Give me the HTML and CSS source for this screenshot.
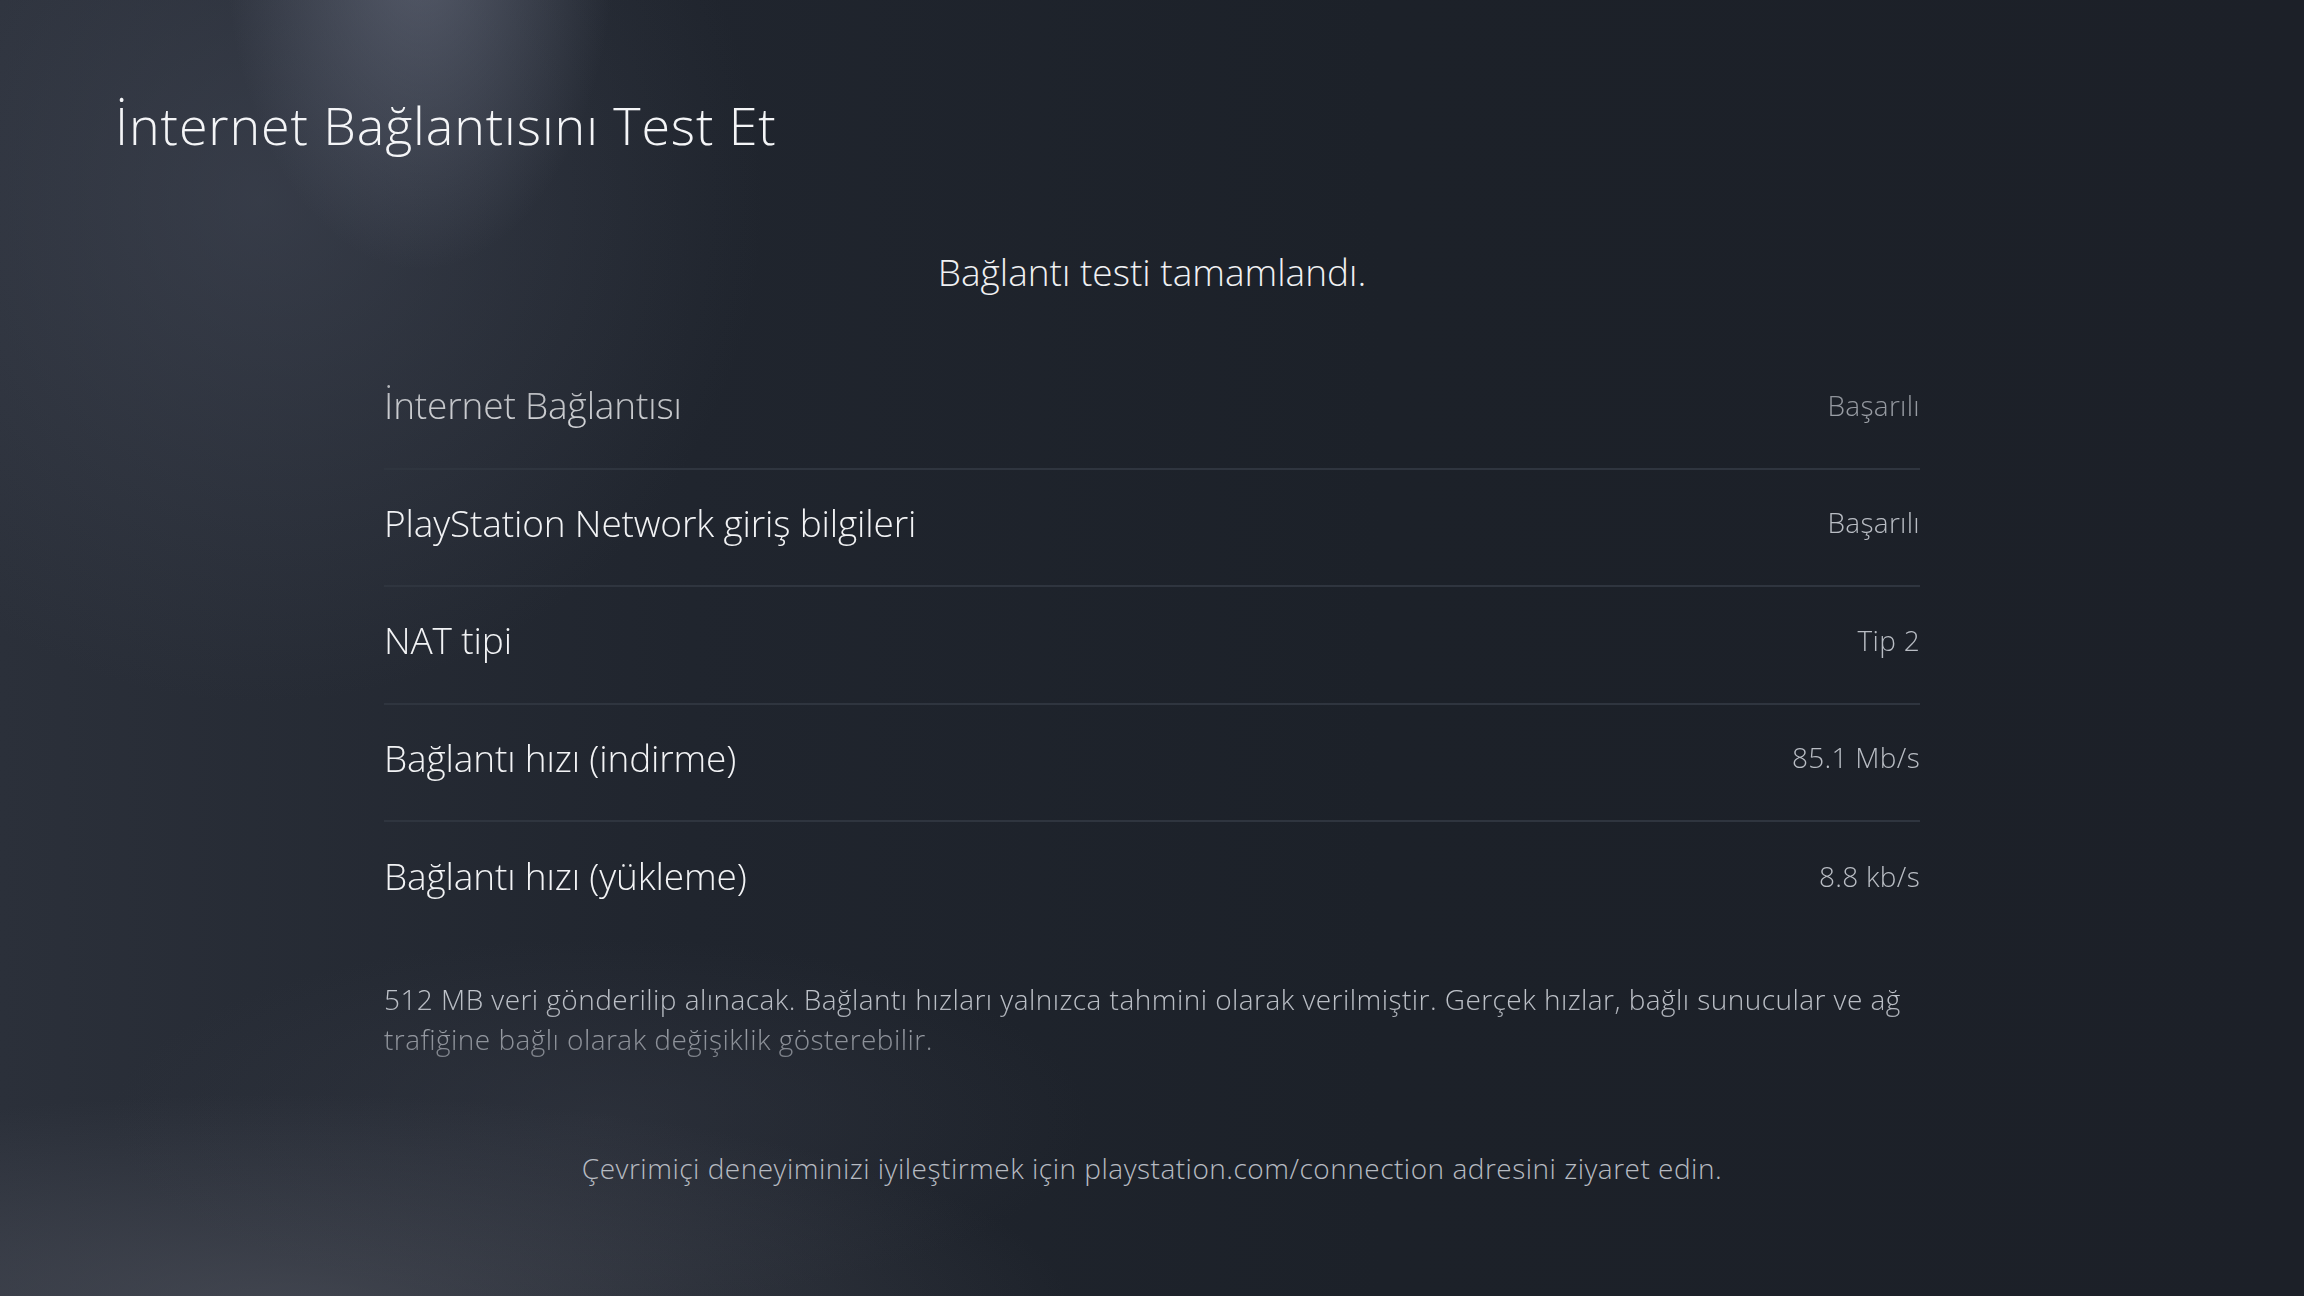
FILE: index.html
```html
<!DOCTYPE html>
<html>
  <head>
    <title>İnternet Bağlantısını Test Et</title>
    <link rel="stylesheet" href="styles.css">
  </head>
  <body>
    <div class="screen">
      <h1 class="screen-title">İnternet Bağlantısını Test Et</h1>

      <p class="status">Bağlantı testi tamamlandı.</p>

      <div class="results">
        <ul class="result-list">
          <li class="result-row">
            <span class="result-label">İnternet Bağlantısı</span>
            <span class="result-value">Başarılı</span>
          </li>
          <li class="result-row">
            <span class="result-label">PlayStation Network giriş bilgileri</span>
            <span class="result-value">Başarılı</span>
          </li>
          <li class="result-row">
            <span class="result-label">NAT tipi</span>
            <span class="result-value">Tip 2</span>
          </li>
          <li class="result-row">
            <span class="result-label">Bağlantı hızı (indirme)</span>
            <span class="result-value">85.1 Mb/s</span>
          </li>
          <li class="result-row">
            <span class="result-label">Bağlantı hızı (yükleme)</span>
            <span class="result-value">8.8 kb/s</span>
          </li>
        </ul>

        <p class="note">512 MB veri gönderilip alınacak. Bağlantı hızları yalnızca tahmini olarak verilmiştir. Gerçek hızlar, bağlı sunucular ve ağ trafiğine bağlı olarak değişiklik gösterebilir.</p>
      </div>

      <p class="footer-hint">Çevrimiçi deneyiminizi iyileştirmek için playstation.com/connection adresini ziyaret edin.</p>
    </div>
  </body>
</html>
```

FILE: styles.css
```css
html,
body {
  margin: 0;
  padding: 0;
  height: 100%;
}

body {
  font-family: "Open Sans", "Noto Sans", sans-serif;
  font-weight: 300;
  color: #f2f3f5;
  overflow: hidden;
  background:
    radial-gradient(ellipse 260px 440px at 420px -60px, rgba(125, 131, 150, 0.50), transparent 75%),
    radial-gradient(ellipse 700px 700px at 260px 200px, rgba(78, 84, 100, 0.40), transparent 72%),
    radial-gradient(ellipse 1100px 300px at 280px 1310px, rgba(92, 95, 106, 0.50), transparent 72%),
    radial-gradient(ellipse 700px 260px at 600px 1120px, rgba(62, 66, 78, 0.35), transparent 70%),
    linear-gradient(to right, #2b303a 0%, #20252e 30%, #1c2129 60%, #1c2028 100%);
}

.screen {
  width: 2304px;
  height: 1296px;
}

.screen-title {
  margin: 0;
  padding: 95px 0 0 115px;
  font-size: 52px;
  font-weight: 300;
  line-height: 60px;
  letter-spacing: 0.9px;
  color: #f4f5f7;
}

.status {
  margin: 93px 0 0;
  font-size: 37px;
  line-height: 48px;
  text-align: center;
  color: #f0f1f3;
}

.results {
  width: 1536px;
  margin: 56px auto 0;
  -webkit-mask-image: linear-gradient(to bottom, rgba(0, 0, 0, 0.55) 0, #000 110px, #000 calc(100% - 60px), rgba(0, 0, 0, 0.55) 100%);
  mask-image: linear-gradient(to bottom, rgba(0, 0, 0, 0.55) 0, #000 110px, #000 calc(100% - 60px), rgba(0, 0, 0, 0.55) 100%);
}

.result-list {
  list-style: none;
  margin: 0;
  padding: 0;
}

.result-row {
  display: flex;
  align-items: center;
  justify-content: space-between;
  box-sizing: border-box;
  height: 117.5px;
  padding-bottom: 10px;
  border-bottom: 2px solid #2f353f;
}

.result-row:last-child {
  border-bottom: none;
}

.result-label {
  font-size: 37px;
  letter-spacing: -0.15px;
  color: #f2f3f5;
}

.result-value {
  font-size: 28px;
  letter-spacing: 0.3px;
  color: #b9bdc4;
}

.note {
  margin: 39px 0 0;
  font-size: 28px;
  line-height: 40px;
  letter-spacing: 0.45px;
  color: #bfc3ca;
}

.footer-hint {
  margin: 89px 0 0;
  font-size: 28px;
  line-height: 40px;
  letter-spacing: 0.5px;
  text-align: center;
  color: #b7bbc2;
}
```
